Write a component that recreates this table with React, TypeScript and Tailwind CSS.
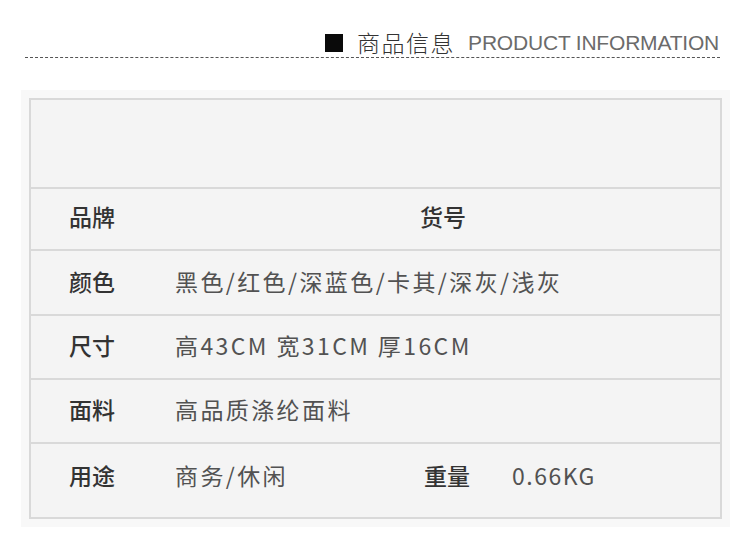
const cjk = { fontFamily: '"Noto Sans CJK SC", "Noto Sans", sans-serif' };

type Row = {
  label: string;
  value?: string;
  label2?: string;
  value2?: string;
  h: string;
  extra?: string;
};

const rows: Row[] = [
  { label: "品牌", label2: "货号", h: "h-[62px]", extra: "pb-[5px]" },
  { label: "颜色", value: "黑色/红色/深蓝色/卡其/深灰/浅灰", h: "h-[65px]", extra: "pb-[3px]" },
  { label: "尺寸", value: "高43CM 宽31CM 厚16CM", h: "h-[64px]", extra: "pb-[3px]" },
  { label: "面料", value: "高品质涤纶面料", h: "h-[64px]", extra: "pb-[3px]" },
  { label: "用途", value: "商务/休闲", label2: "重量", value2: "0.66KG", h: "h-[73px]", extra: "pb-[10px]" },
];

export default function App() {
  return (
    <div className="w-[750px] h-[536px] bg-white" style={cjk}>
      <div className="flex items-center justify-end pt-[29px] pr-[31px] h-[56px]">
        <div className="w-[18px] h-[18px] bg-[#0a0a0a] mr-[14px]" />
        <span className="text-[23px] font-light text-[#333] leading-none tracking-[1.5px]">商品信息</span>
        <span
          className="ml-[13px] text-[21px] font-light text-[#6b6b6b] leading-none tracking-[-0.2px]"
          style={{ fontFamily: '"Liberation Sans", Arial, sans-serif' }}
        >
          PRODUCT INFORMATION
        </span>
      </div>
      <div className="ml-[25px] mr-[30px] mt-[1px] border-b border-dashed border-[#555]" />

      <div className="ml-[21px] mt-[32px] w-[709px] h-[437px] bg-[#f8f8f8] p-[8px]">
        <div className="border-2 border-[#d9d9d9] bg-[#f4f4f4] h-full flex flex-col">
          <div className="h-[89px] shrink-0 border-b-2 border-[#d9d9d9]" />
          {rows.map((r, i) => (
            <div
              key={r.label}
              className={`${r.h} shrink-0 ${i < rows.length - 1 ? "border-b-2 border-[#d9d9d9]" : ""} ${r.extra ?? ""} flex items-center pl-[38px]`}
            >
              <span className="w-[106px] text-[23px] font-medium text-[#333]">{r.label}</span>
              <span className="w-[245px] text-[23px] text-[#525252] tracking-[2.4px] whitespace-nowrap">{r.value}</span>
              {r.label2 && (
                <span className={`${r.value2 ? "ml-[4px] w-[88px]" : ""} text-[23px] font-medium text-[#333]`}>{r.label2}</span>
              )}
              {r.value2 && <span className="text-[23px] text-[#525252] tracking-[1.5px]">{r.value2}</span>}
            </div>
          ))}
        </div>
      </div>
    </div>
  );
}
